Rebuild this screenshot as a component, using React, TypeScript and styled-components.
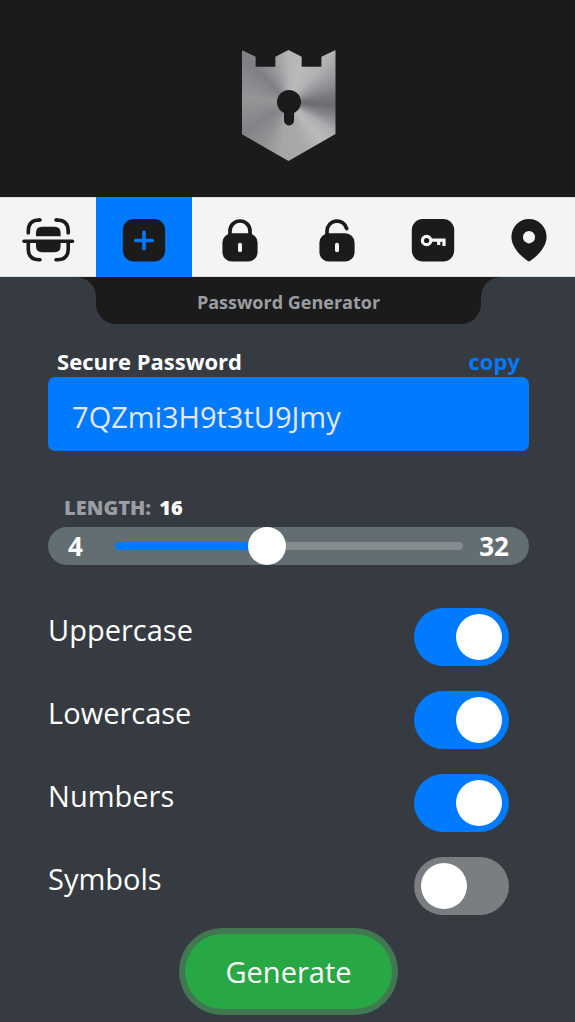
import React, { useState } from "react";
import styled, { createGlobalStyle } from "styled-components";

const INK = "#1b1b1b";
const PAPER = "#f4f4f4";
const PANEL = "#363a41";
const BLUE = "#007bff";

const GlobalStyle = createGlobalStyle`
  *, *::before, *::after { box-sizing: border-box; }
  body {
    margin: 0;
    background: ${PANEL};
    color: #fff;
    font-family: "Open Sans", "Noto Sans", sans-serif;
    overflow-x: hidden;
  }
  button, input { font-family: inherit; }
`;

const Shell = styled.div`
  margin-right: -2px;
`;

const Header = styled.header`
  display: flex;
  justify-content: center;
  padding: 50px 0 35px;
  background: ${INK};
`;

const Shield = styled.div`
  width: 94px;
  height: 112px;
  clip-path: polygon(0 0, 15% 6%, 15% 15%, 36% 15%, 36% 6%, 50% 0, 64% 6%, 64% 15%, 85% 15%, 85% 6%, 100% 0, 100% 75%, 50% 99%, 0 75%);
  background: conic-gradient(
    from 0deg at 50% 47%,
    #b4b4b6 0deg, #bababc 20deg, #b2b2b4 42deg, #929396 64deg, #727478 84deg, #6b6d71 94deg,
    #85868a 108deg, #abacae 122deg, #bababc 138deg, #a9a9ab 162deg, #a6a6a8 190deg,
    #8f8f92 215deg, #838487 238deg, #909093 262deg, #959598 278deg,
    #88898c 300deg, #7f8083 316deg, #98999b 338deg, #b4b4b6 360deg
  );
`;

const Nav = styled.nav`
  display: grid;
  grid-template-columns: repeat(6, 1fr);
  background: ${PAPER};
`;

const NavLink = styled.a<{ $active?: boolean }>`
  display: flex;
  justify-content: center;
  padding: 18px 0 12px;
  color: ${INK};
  background: ${(p) => (p.$active ? BLUE : PAPER)};
  border: solid ${(p) => (p.$active ? BLUE : "#dcdcdc")};
  border-width: 1px 0;
`;

const TitleRow = styled.div`
  display: grid;
  grid-template-columns: 1fr 4fr 1fr;
`;

const TitleSide = styled.div<{ $side: "left" | "right" }>`
  display: grid;
  background: ${INK};
  &::before {
    content: "";
    background: ${PANEL};
    border-radius: ${(p) => (p.$side === "left" ? "0 20px 0 0" : "20px 0 0 0")};
  }
`;

const Title = styled.h1`
  margin: 0;
  padding: 13px 0 10px;
  background: ${INK};
  border-radius: 0 0 20px 20px;
  color: #9a9da1;
  font-size: 18px;
  line-height: 24px;
  font-weight: 700;
  text-align: center;
`;

const Main = styled.main`
  padding: 22px 8.333% 12px;
`;

const FieldHead = styled.div`
  display: flex;
  justify-content: space-between;
  padding: 0 9px;
  font-size: 22px;
  line-height: 31px;
  font-weight: 700;
`;

const CopyButton = styled.button`
  padding: 0;
  border: 0;
  background: none;
  color: ${BLUE};
  font-size: 22px;
  line-height: 31px;
  font-weight: 700;
  cursor: pointer;
`;

const PasswordInput = styled.input`
  display: block;
  width: 100%;
  height: 74px;
  padding: 4px 24px 0;
  border: 0;
  border-radius: 7px;
  background: ${BLUE};
  color: #e4e8ee;
  font-size: 29px;
`;

const LengthLabel = styled.label`
  display: block;
  margin-top: 45px;
  padding: 0 16px;
  color: #9a9da1;
  font-size: 20px;
  line-height: 24px;
  font-weight: 800;
`;

const LengthValue = styled.output`
  margin-left: 3px;
  color: #fff;
`;

const SliderBar = styled.div`
  display: flex;
  align-items: center;
  justify-content: space-between;
  margin-top: 7px;
  height: 38px;
  padding: 0 20px;
  border-radius: 19px;
  background: #636e72;
  font-size: 26px;
  line-height: 38px;
  font-weight: 700;
`;

const Range = styled.input<{ $fill: number }>`
  appearance: none;
  flex: 1;
  min-width: 0;
  height: 38px;
  margin: 0 16px 0 32px;
  background: none;
  cursor: pointer;
  &::-webkit-slider-runnable-track {
    height: 8px;
    border-radius: 4px;
    background: linear-gradient(to right, ${BLUE} ${(p) => p.$fill}%, #858b8f ${(p) => p.$fill}%);
  }
  &::-webkit-slider-thumb {
    appearance: none;
    width: 38px;
    height: 38px;
    margin-top: -15px;
    border-radius: 50%;
    background: #fff;
  }
`;

const Options = styled.div`
  display: flex;
  flex-direction: column;
  gap: 25px;
  margin-top: 43px;
`;

const Option = styled.label`
  display: flex;
  align-items: flex-start;
  justify-content: space-between;
  height: 58px;
  padding-right: 20px;
  font-size: 29px;
  line-height: 44px;
`;

const Switch = styled.input`
  appearance: none;
  display: flex;
  align-items: center;
  width: 95px;
  height: 58px;
  margin: 0;
  padding: 0 7px;
  border-radius: 29px;
  background: #7b7e80;
  cursor: pointer;
  &::before {
    content: "";
    width: 46px;
    height: 46px;
    border-radius: 50%;
    background: #fff;
  }
  &:checked {
    justify-content: flex-end;
    background: ${BLUE};
  }
`;

const Actions = styled.div`
  display: flex;
  justify-content: center;
  margin-top: 19px;
`;

const GenerateButton = styled.button`
  height: 75px;
  padding: 0 40px;
  border: 0;
  border-radius: 38px;
  background: #28a745;
  box-shadow: 0 0 0 6px #417852;
  color: #fff;
  font-size: 29px;
  cursor: pointer;
`;

const Glyph = ({ children }: { children: React.ReactNode }) => (
  <svg width="56" height="48" viewBox="0 0 56 48" fill="none" aria-hidden="true">
    {children}
  </svg>
);

const ScanIcon = () => (
  <Glyph>
    <g stroke={INK} strokeWidth="3.6" strokeLinecap="round">
      <path d="M8.3 17V15Q8.3 4 19.3 4M36.7 4Q48.2 4 48.2 15V17" />
      <path d="M19.3 4H20M36 4H36.7" />
      <path d="M4 25.3H52.5M8.3 25.3V33Q8.3 43.7 19.3 43.7H20M36 43.7H37.2Q48.2 43.7 48.2 33V25.3" />
    </g>
    <path d="M16 20.3V17Q16 10.8 22 10.8H34.6Q40.6 10.8 40.6 17V20.3ZM16 27H40.6V30Q40.6 36.2 34.6 36.2H22Q16 36.2 16 30Z" fill={INK} />
  </Glyph>
);

const PlusIcon = () => (
  <Glyph>
    <rect x="6.8" y="3" width="42.4" height="42.5" rx="11" fill={INK} />
    <path d="M28 16.2V32.8M19.7 24.5H36.3" stroke={BLUE} strokeWidth="3.6" strokeLinecap="round" />
  </Glyph>
);

const LockIcon = ({ open }: { open?: boolean }) => (
  <Glyph>
    <path
      d={open ? "M18 20V15A10 10 0 0 1 37.7 12.6" : "M18 20V15A10 10 0 0 1 38 15V20"}
      stroke={INK}
      strokeWidth="3.7"
      strokeLinecap="round"
    />
    <rect x="10.4" y="17.3" width="35.2" height="28.2" rx="9.5" fill={INK} />
    <rect x="26" y="26.7" width="4" height="9.5" rx="2" fill={PAPER} />
  </Glyph>
);

const KeyIcon = () => (
  <Glyph>
    <rect x="6.8" y="3" width="42.4" height="42.5" rx="11" fill={INK} />
    <circle cx="21.6" cy="24.5" r="4.2" stroke={PAPER} strokeWidth="3.2" />
    <path d="M25.7 24.2H39V30M33.7 24.2V29" stroke={PAPER} strokeWidth="3.2" />
  </Glyph>
);

const PinIcon = () => (
  <Glyph>
    <path
      fillRule="evenodd"
      d="M28 45.5C25.2 44.4 10.4 33.5 10.4 21A17.6 18 0 0 1 45.6 21C45.6 33.5 30.8 44.4 28 45.5ZM28 15A6 6.2 0 1 0 28 27.4A6 6.2 0 1 0 28 15Z"
      fill={INK}
    />
  </Glyph>
);

const tabs = [
  { name: "Scan", icon: <ScanIcon /> },
  { name: "Generator", icon: <PlusIcon />, active: true },
  { name: "Encrypt", icon: <LockIcon /> },
  { name: "Decrypt", icon: <LockIcon open /> },
  { name: "Keys", icon: <KeyIcon /> },
  { name: "Location", icon: <PinIcon /> },
];

const sets: Record<string, string> = {
  Uppercase: "ABCDEFGHIJKLMNOPQRSTUVWXYZ",
  Lowercase: "abcdefghijklmnopqrstuvwxyz",
  Numbers: "0123456789",
  Symbols: "!@#$%^&*()-_=+?",
};

export default function App() {
  const [password, setPassword] = useState("7QZmi3H9t3tU9Jmy");
  const [length, setLength] = useState(16);
  const [enabled, setEnabled] = useState<Record<string, boolean>>({
    Uppercase: true,
    Lowercase: true,
    Numbers: true,
    Symbols: false,
  });

  const generate = () => {
    const pool = Object.keys(sets).filter((k) => enabled[k]).map((k) => sets[k]).join("");
    if (!pool) return;
    setPassword(Array.from({ length }, () => pool[Math.floor(Math.random() * pool.length)]).join(""));
  };

  return (
    <>
      <GlobalStyle />
      <Shell>
        <Header>
          <Shield>
            <svg width="94" height="112" viewBox="0 0 94 112" aria-hidden="true">
              <circle cx="47" cy="52" r="12" fill={INK} />
              <rect x="42" y="56" width="10" height="19.5" rx="5" fill={INK} />
            </svg>
          </Shield>
        </Header>
        <Nav>
          {tabs.map((t) => (
            <NavLink key={t.name} href="#" aria-label={t.name} $active={t.active}>
              {t.icon}
            </NavLink>
          ))}
        </Nav>
        <TitleRow>
          <TitleSide $side="left" />
          <Title>Password Generator</Title>
          <TitleSide $side="right" />
        </TitleRow>
        <Main>
          <FieldHead>
            <label htmlFor="password">Secure Password</label>
            <CopyButton type="button" onClick={() => navigator.clipboard?.writeText(password)}>
              copy
            </CopyButton>
          </FieldHead>
          <PasswordInput id="password" readOnly value={password} />
          <LengthLabel htmlFor="length">
            LENGTH: <LengthValue>{length}</LengthValue>
          </LengthLabel>
          <SliderBar>
            <span>4</span>
            <Range
              id="length"
              type="range"
              min={4}
              max={32}
              value={length}
              $fill={((length - 4) / 28) * 100}
              onChange={(e) => setLength(Number(e.target.value))}
            />
            <span>32</span>
          </SliderBar>
          <Options>
            {Object.keys(sets).map((name) => (
              <Option key={name}>
                {name}
                <Switch
                  type="checkbox"
                  checked={enabled[name]}
                  onChange={(e) => setEnabled({ ...enabled, [name]: e.target.checked })}
                />
              </Option>
            ))}
          </Options>
          <Actions>
            <GenerateButton type="button" onClick={generate}>
              Generate
            </GenerateButton>
          </Actions>
        </Main>
      </Shell>
    </>
  );
}
